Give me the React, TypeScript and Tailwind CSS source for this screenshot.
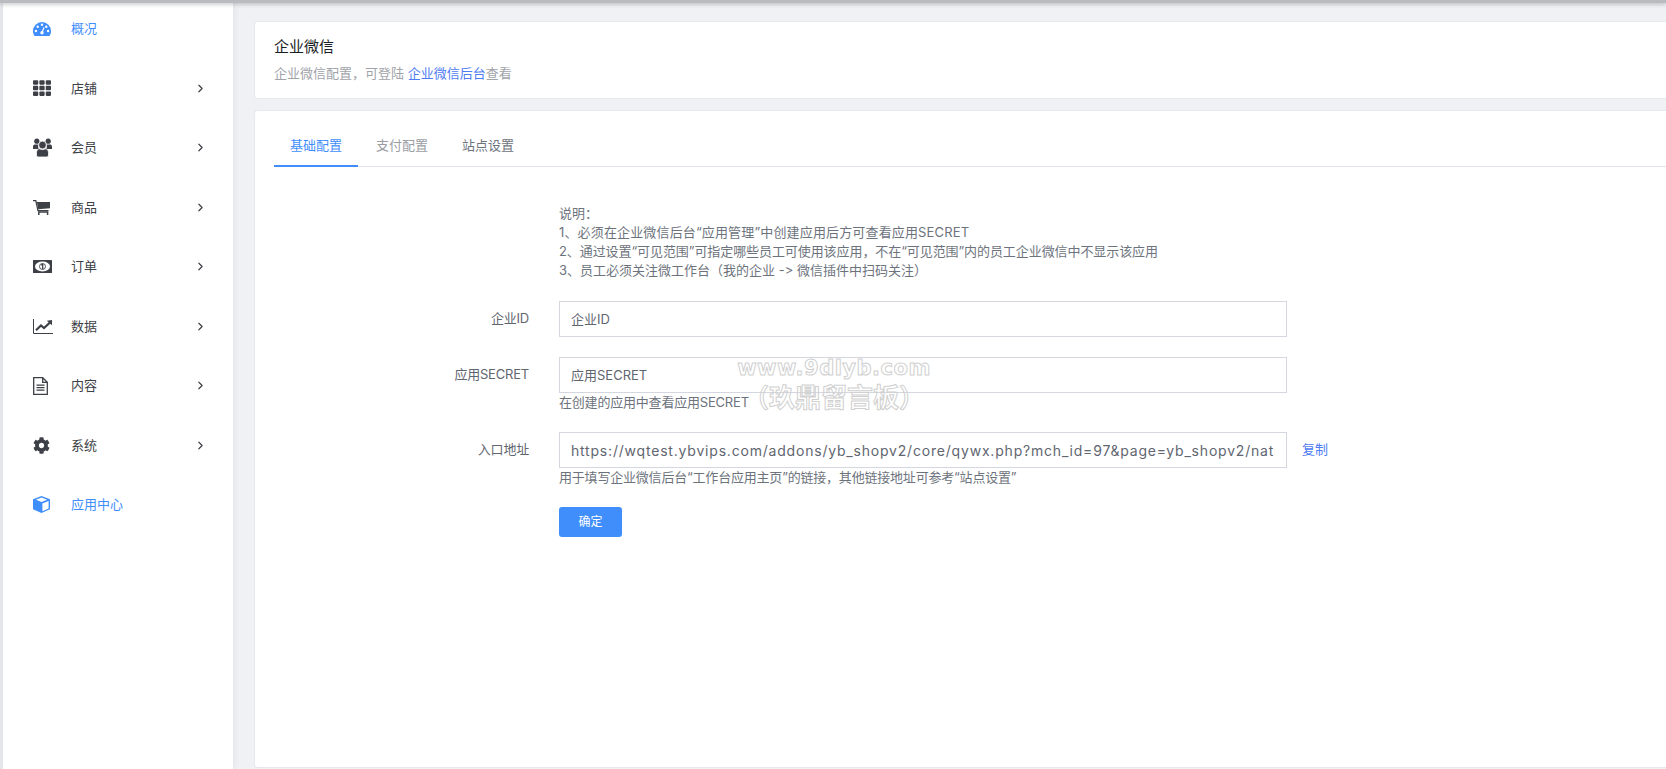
import type { ReactNode } from "react";
import { ChevronRight } from "lucide-react";
import { FaTh, FaCog } from "react-icons/fa";

const font = "font-['Inter','Noto_Sans_CJK_SC',sans-serif]";

const DashboardIcon = () => (
  <svg viewBox="0 0 18 14" className="w-[18px] h-[14px]">
    <path fill="currentColor" d="M9 0A9 9 0 0 0 0 9c0 1.900.6 3.600 1.600 5h14.800c1-1.400 1.600-3.100 1.600-5A9 9 0 0 0 9 0z" />
    <g fill="#fff">
      <circle cx="2.900" cy="9" r="1.200" />
      <circle cx="4.700" cy="4.700" r="1.200" />
      <circle cx="9" cy="2.800" r="1.200" />
      <circle cx="13.300" cy="4.700" r="1.200" />
      <circle cx="15.100" cy="9" r="1.200" />
      <circle cx="9" cy="10.800" r="1.700" />
    </g>
    <path stroke="#fff" strokeWidth="1.200" d="M9 10.800l2-5.400" />
  </svg>
);

const UsersIcon = () => (
  <svg viewBox="0 0 19 19" className="w-[19px] h-[19px]">
    <g fill="currentColor">
      <circle cx="3.800" cy="3.200" r="2.600" />
      <circle cx="15.200" cy="3.200" r="2.600" />
      <path d="M0 11V8.800C0 7 1 6.400 2.300 6.400h3C4.800 8 5 9.600 6 11z" />
      <path d="M19 11V8.800c0-1.800-1-2.400-2.300-2.400h-3c.5 1.600.3 3.200-.7 4.600z" />
    </g>
    <circle cx="9.500" cy="7" r="3.900" fill="currentColor" stroke="#fff" strokeWidth="0.800" />
    <path fill="currentColor" stroke="#fff" strokeWidth="0.800" d="M3.500 17.200v-2.700c0-2.300 1.200-3.700 3.300-3.700 1.500 1 3.900 1 5.400 0 2.100 0 3.300 1.400 3.300 3.700v2.700c0 1.100-1 1.800-2.200 1.800H5.700c-1.200 0-2.200-.7-2.200-1.800z" />
  </svg>
);

const CartIcon = () => (
  <svg viewBox="0 0 17 15" className="w-[17px] h-[15px]">
    <path fill="none" stroke="currentColor" strokeWidth="1.300" d="M0 .7h2.800l2.200 9.900h10.500" />
    <path fill="currentColor" d="M3.900 2H17v6.200L5.300 9.300z" />
    <path fill="none" stroke="currentColor" strokeWidth="1.500" d="M5.800 15v-3h8.800v3" />
  </svg>
);

const MoneyIcon = () => (
  <svg viewBox="0 0 19 13" className="w-[19px] h-[13px]">
    <rect width="19" height="13" rx="0.500" fill="currentColor" />
    <ellipse cx="9.500" cy="6.500" rx="7.500" ry="5" fill="#fff" />
    <circle cx="9.500" cy="6.500" r="3" fill="none" stroke="currentColor" strokeWidth="0.900" />
    <path fill="none" stroke="currentColor" strokeWidth="1.300" d="M9.700 4v5M8.300 5.200l1.400-1.200" />
  </svg>
);

const ChartIcon = () => (
  <svg viewBox="0 0 20 15" className="w-[20px] h-[15px]">
    <path fill="none" stroke="currentColor" strokeWidth="1" d="M.5 0v14.500H20" />
    <path fill="none" stroke="currentColor" strokeWidth="2.200" d="M3 11.300l5-4.800 3 2.600 6.300-5.900" />
    <path fill="currentColor" d="M13.800 1.700L19 1v5.200z" />
  </svg>
);

const FileIcon = () => (
  <svg viewBox="0 0 15 18" className="w-[15px] h-[18px]">
    <path fill="none" stroke="currentColor" strokeWidth="1.300" d="M.7.7h9l4.600 4.600v12H.7zM9.700.7v4.600h4.600" />
    <path fill="none" stroke="currentColor" strokeWidth="1.300" d="M3.500 8.200h8M3.500 10.700h8M3.500 13.200h8" />
  </svg>
);

const CubeIcon = () => (
  <svg viewBox="0 0 17 17" className="w-[17px] h-[17px]">
    <path fill="currentColor" d="M8.500 0L17 3.300v10L8.500 17 0 13.300v-10z" />
    <path fill="#fff" d="M8.500 1.500l5.600 2.200-5.600 2.200-5.600-2.200zM9.400 7.400l6.200-2.400v7.400l-6.200 2.800z" />
  </svg>
);

const menu: { label: string; icon: ReactNode; active?: boolean; arrow?: boolean }[] = [
  { label: "概况", icon: <DashboardIcon />, active: true },
  { label: "店铺", icon: <FaTh className="w-[18px] h-[18px]" />, arrow: true },
  { label: "会员", icon: <UsersIcon />, arrow: true },
  { label: "商品", icon: <CartIcon />, arrow: true },
  { label: "订单", icon: <MoneyIcon />, arrow: true },
  { label: "数据", icon: <ChartIcon />, arrow: true },
  { label: "内容", icon: <FileIcon />, arrow: true },
  { label: "系统", icon: <FaCog className="w-[17px] h-[17px]" />, arrow: true },
  { label: "应用中心", icon: <CubeIcon />, active: true },
];

function Sidebar() {
  return (
    <aside className="w-[233px] shrink-0 bg-white border-l-[3px] border-[#e4e6eb] shadow-[2px_0_6px_rgba(0,0,0,0.05)]">
      <div className="-mt-px">
        {menu.map((item) => (
          <div
            key={item.label}
            className={`h-[59.5px] flex items-center pl-[30px] pr-[26px] text-[13px] ${
              item.active ? "text-[#3f8efc]" : "text-[#3d4147]"
            }`}
          >
            <span className="w-[38px] shrink-0 flex items-center">{item.icon}</span>
            <span className="flex-1">{item.label}</span>
            {item.arrow && <ChevronRight className="w-[13px] h-[13px]" strokeWidth={2.2} />}
          </div>
        ))}
      </div>
    </aside>
  );
}

function Field({
  label,
  value,
  help,
  action,
  url,
}: {
  label: string;
  value: string;
  help?: string;
  action?: string;
  url?: boolean;
}) {
  return (
    <div className="flex mb-[20px]">
      <div className="w-[255px] shrink-0 h-[36px] flex items-center justify-end text-[13px] tracking-[-0.2px] text-[#5f6670]">
        {label}
      </div>
      <div className="ml-[30px]">
        <div className="flex items-center">
          <input
            readOnly
            value={value}
            className={`w-[728px] h-[36px] border-[1.5px] border-[#d4d7e0] bg-white px-[11px] text-[#5f6670] outline-none ${
              url ? "text-[14px] tracking-[0.8px]" : "text-[13px] pb-[2px]"
            }`}
          />
          {action && <span className="ml-[15px] text-[13px] text-[#4f7cf5]">{action}</span>}
        </div>
        {help && (
          <div className="text-[13px] leading-[19px] tracking-[-0.2px] text-[#6d737c] -mb-[19px]">{help}</div>
        )}
      </div>
    </div>
  );
}

export default function App() {
  return (
    <div className={`relative h-[769px] w-full overflow-hidden flex bg-[#f0f1f5] ${font}`}>
      {/* top shadow */}
      <div className="absolute z-10 top-0 left-0 right-0 h-[3px] bg-[#b9bbc0] shadow-[0_1px_4px_rgba(0,0,0,0.3)]" />
      <Sidebar />
      <main className="flex-1 min-w-0 pl-[21px] pt-[21px] flex flex-col">
        <section className="h-[78px] shrink-0 bg-white rounded-l-[4px] border border-r-0 border-[#e6e8ee] pl-[19px] pt-[14px]">
          <h1 className="text-[15px] leading-[22px] text-[#1b1e24]">企业微信</h1>
          <p className="mt-[6px] text-[13px] leading-[19px] text-[#a0a3a9]">
            企业微信配置，可登陆 <span className="text-[#4f7cf5]">企业微信后台</span>查看
          </p>
        </section>
        <section className="mt-[11px] h-[658px] shrink-0 bg-white rounded-l-[4px] border border-r-0 border-[#e6e8ee] pt-[15px]">
          <div className="ml-[19px] flex h-[41px] border-b border-[#e1e4ea] text-[13px]">
            <div className="w-[84px] h-[41px] flex items-center justify-center text-[#3f8efc] border-b-2 border-[#3f8efc]">
              基础配置
            </div>
            <div className="w-[84px] ml-[2px] h-[40px] flex items-center justify-center text-[#9a9da3]">
              支付配置
            </div>
            <div className="w-[84px] ml-[2px] h-[40px] flex items-center justify-center text-[#6d737c]">
              站点设置
            </div>
          </div>
          <div className="pl-[19px] pt-[37px]">
            <div className="ml-[285px] mb-[21px] text-[13px] leading-[19px] text-[#6d737c] [font-feature-settings:'calt'_0]">
              <p>说明：</p>
              <p className="tracking-[0.15px]">1、必须在企业微信后台“应用管理”中创建应用后方可查看应用SECRET</p>
              <p className="tracking-[-0.08px]">2、通过设置“可见范围”可指定哪些员工可使用该应用，不在“可见范围”内的员工企业微信中不显示该应用</p>
              <p>3、员工必须关注微工作台（我的企业 -&gt; 微信插件中扫码关注）</p>
            </div>
            <Field label="企业ID" value="企业ID" />
            <Field label="应用SECRET" value="应用SECRET" help="在创建的应用中查看应用SECRET" />
            <div className="h-[19px]" />
            <Field
              url
              label="入口地址"
              value="https://wqtest.ybvips.com/addons/yb_shopv2/core/qywx.php?mch_id=97&page=yb_shopv2/native/index"
              help="用于填写企业微信后台“工作台应用主页”的链接，其他链接地址可参考“站点设置”"
              action="复制"
            />
            <div className="h-[19px]" />
            <div className="ml-[285px]">
              <button className="w-[63px] h-[30px] rounded-[3px] bg-[#3f8efc] text-white text-[12px]">确定</button>
            </div>
          </div>
        </section>
      </main>
      {/* watermark */}
      <div className="absolute left-[738px] top-[353px] w-[192px] flex flex-col items-center text-transparent [-webkit-text-stroke:1px_#d0d0d0] font-bold pointer-events-none">
        <span className="font-['DejaVu_Sans',sans-serif] text-[21px] leading-[31px] tracking-[0.5px] whitespace-nowrap">
          www.9dlyb.com
        </span>
        <span className="text-[26px] leading-[28px] whitespace-nowrap">（玖鼎留言板）</span>
      </div>
    </div>
  );
}
